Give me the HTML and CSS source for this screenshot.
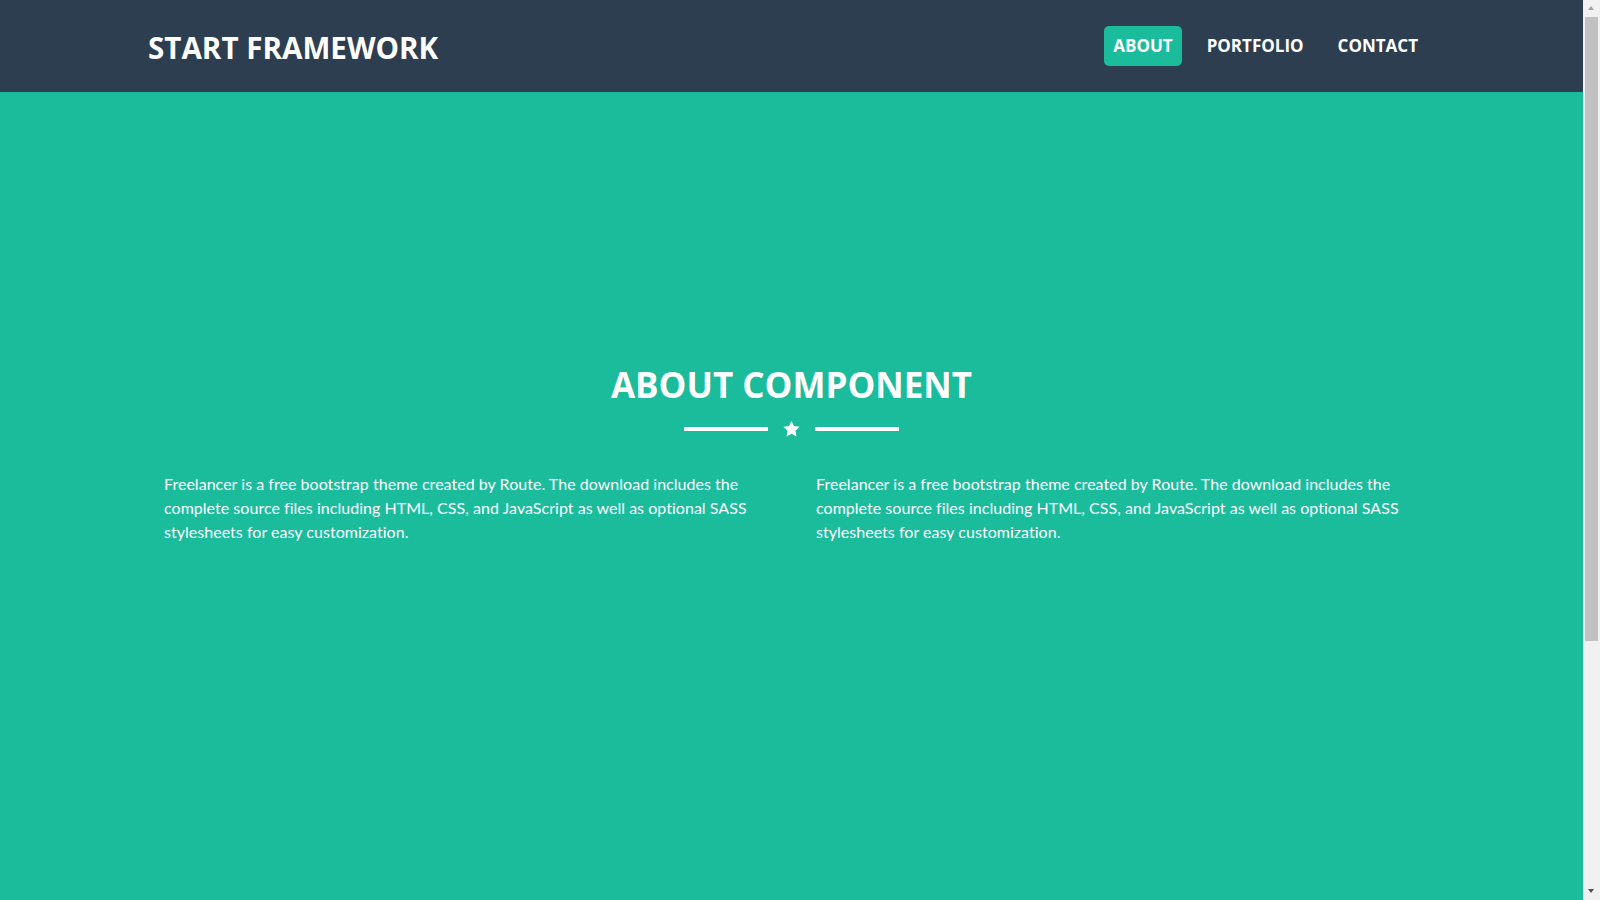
FILE: index.html
```html
<!DOCTYPE html>
<html lang="en">
<head>
<meta charset="utf-8">
<title>Start Framework</title>
<link rel="stylesheet" href="styles.css">
</head>
<body>
<header class="navbar">
  <a class="brand" href="#">START FRAMEWORK</a>
  <nav class="nav">
    <a class="nav-link active" href="#">ABOUT</a>
    <a class="nav-link" href="#">PORTFOLIO</a>
    <a class="nav-link" href="#">CONTACT</a>
  </nav>
</header>
<section class="about">
  <h2 class="title">ABOUT COMPONENT</h2>
  <div class="divider">
    <span class="line"></span>
    <svg class="star" viewBox="0 0 17 16" width="17" height="16" aria-hidden="true">
      <polygon fill="#fff" points="8.5,0 10.97,5.1 16.58,5.87 12.49,9.8 13.5,15.38 8.5,12.7 3.5,15.38 4.51,9.8 0.42,5.87 6.03,5.1"/>
    </svg>
    <span class="line"></span>
  </div>
  <div class="columns">
    <p class="text">Freelancer is a free bootstrap theme created by Route. The download includes the complete source files including HTML, CSS, and JavaScript as well as optional SASS stylesheets for easy customization.</p>
    <p class="text">Freelancer is a free bootstrap theme created by Route. The download includes the complete source files including HTML, CSS, and JavaScript as well as optional SASS stylesheets for easy customization.</p>
  </div>
</section>
<div class="scrollbar" aria-hidden="true">
  <span class="arrow arrow-up"></span>
  <span class="thumb"></span>
  <span class="arrow arrow-down"></span>
</div>
</body>
</html>
```

FILE: styles.css
```css
html {
  overflow: hidden;
}

html, body {
  margin: 0;
  padding: 0;
}

body {
  margin-right: 17px;
  background: #1abc9c;
  color: #fff;
  font-family: "Open Sans", "Noto Sans", sans-serif;
}

a {
  color: #fff;
  text-decoration: none;
}

.navbar {
  background: #2c3e50;
  height: 92px;
  display: flex;
  align-items: center;
  justify-content: space-between;
  padding: 0 156px 0 148px;
}

.brand {
  font-weight: 700;
  font-size: 29.6px;
  padding-top: 2px;
}

.nav {
  display: flex;
  gap: 16px;
}

.nav-link {
  font-weight: 700;
  font-size: 17px;
  line-height: 24px;
  padding: 8px 9px;
  border-radius: 5px;
}

.nav-link.active {
  background: #1abc9c;
}

.about {
  min-height: 1156px;
  box-sizing: border-box;
  padding-top: 272px;
}

.title {
  margin: 0;
  text-align: center;
  font-size: 35px;
  line-height: 42px;
  font-weight: 700;
}

.divider {
  margin-top: 15px;
  display: flex;
  justify-content: center;
  align-items: center;
  gap: 15px;
  height: 16px;
}

.line {
  width: 84px;
  height: 4px;
  background: #fff;
}

.star {
  display: block;
}

.columns {
  margin-top: 35px;
  padding-left: 164px;
  display: grid;
  grid-template-columns: 620px 620px;
  column-gap: 32px;
}

.text {
  margin: 0;
  font-family: "Lato", "Open Sans", sans-serif;
  font-size: 16px;
  line-height: 24px;
  letter-spacing: 0.03px;
}

/* Windows-style vertical scrollbar drawn over the page edge */
.scrollbar {
  position: fixed;
  top: 0;
  right: 0;
  width: 17px;
  height: 100vh;
  background: #f1f1f1;
}

.thumb {
  position: absolute;
  top: 17px;
  left: 2px;
  width: 13px;
  height: 624px;
  background: #c1c1c1;
}

.arrow {
  position: absolute;
  left: 5px;
  width: 0;
  height: 0;
  border-left: 3.5px solid transparent;
  border-right: 3.5px solid transparent;
}

.arrow-up {
  top: 6px;
  border-bottom: 4px solid #a3a3a3;
}

.arrow-down {
  bottom: 7px;
  border-top: 4px solid #505050;
}
```
